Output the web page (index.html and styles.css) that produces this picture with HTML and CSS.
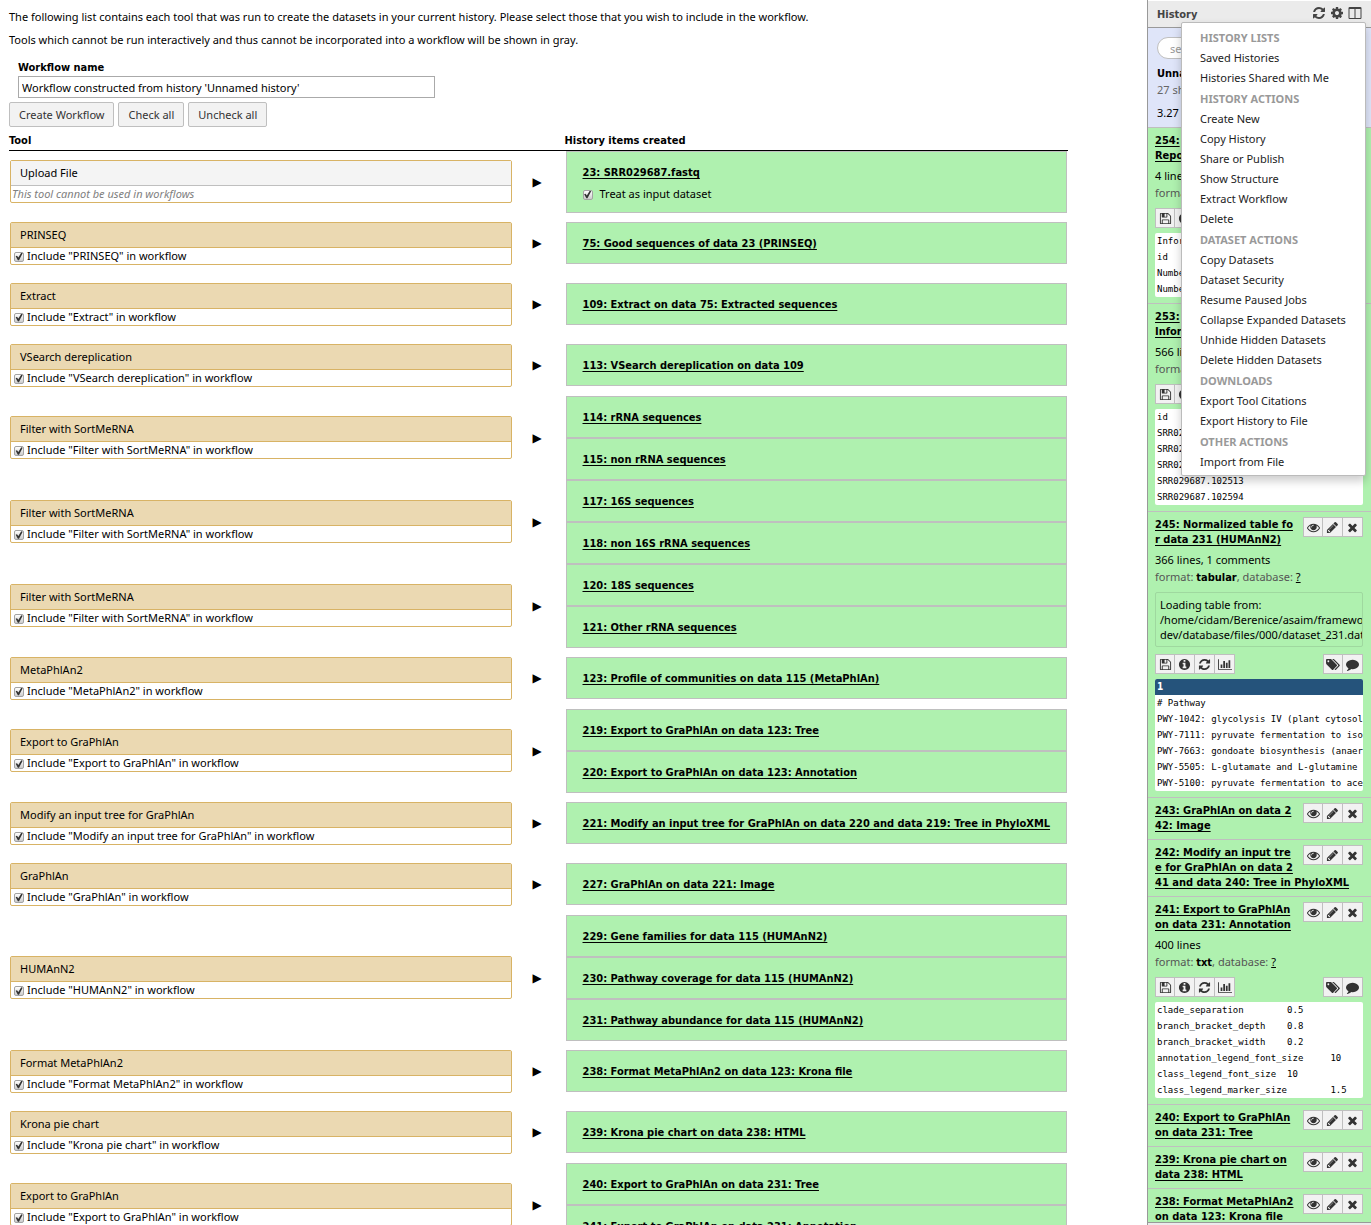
FILE: index.html
```
<!DOCTYPE html>
<html lang="en">
<head>
<meta charset="utf-8">
<title>Extract workflow from history</title>
<link rel="stylesheet" href="styles.css">
</head>
<body>
<svg class="sprite" aria-hidden="true">
  <symbol id="i-refresh" viewBox="0 0 1792 1792"><path d="M1639 1056q0 5-1 7-64 268-268 434.5t-478 166.5q-146 0-282.5-55t-243.5-157l-129 129q-19 19-45 19t-45-19-19-45v-448q0-26 19-45t45-19h448q26 0 45 19t19 45-19 45l-137 137q71 66 161 102t187 36q134 0 250-65t186-179q11-17 53-117 8-23 30-23h192q13 0 22.5 9.5t9.5 22.5zm25-800v448q0 26-19 45t-45 19h-448q-26 0-45-19t-19-45 19-45l138-138q-148-137-349-137-134 0-250 65t-186 179q-11 17-53 117-8 23-30 23h-199q-13 0-22.5-9.5t-9.5-22.5v-7q65-268 270-434.5t480-166.5q146 0 284 55.5t245 156.5l130-129q19-19 45-19t45 19 19 45z"/></symbol>
  <symbol id="i-cog" viewBox="0 0 1792 1792"><path d="M1152 896q0-106-75-181t-181-75-181 75-75 181 75 181 181 75 181-75 75-181zm512-109v222q0 12-8 23t-20 13l-185 28q-19 54-39 91 35 50 107 138 10 12 10 25t-9 23q-27 37-99 108t-94 71q-12 0-26-9l-138-108q-44 23-91 38-16 136-29 186-7 28-36 28h-222q-14 0-24.5-8.5t-11.5-21.5l-28-184q-49-16-90-37l-141 107q-10 9-25 9-14 0-25-11-126-114-165-168-7-10-7-23 0-12 8-23 15-21 51-66.5t54-70.5q-27-50-41-99l-183-27q-13-2-21-12.500t-8-23.500v-222q0-12 8-23t19-13l186-28q14-46 39-92-40-57-107-138-10-12-10-24 0-10 9-23 26-36 98.500-107.500t94.500-71.500q13 0 26 10l138 107q44-23 91-38 16-136 29-186 7-28 36-28h222q14 0 24.500 8.500t11.500 21.500l28 184q49 16 90 37l142-107q9-9 24-9 13 0 25 10 129 119 165 170 7 8 7 22 0 12-8 23-15 21-51 66.500t-54 70.500q26 50 41 98l183 28q13 2 21 12.500t8 23.500z"/></symbol>
  <symbol id="i-columns" viewBox="0 0 1792 1792"><path d="M224 1536h608v-1152h-640v1120q0 13 9.500 22.500t22.500 9.500zm1376-32v-1120h-640v1152h608q13 0 22.500-9.500t9.500-22.500zm128-1216v1216q0 66-47 113t-113 47h-1344q-66 0-113-47t-47-113v-1216q0-66 47-113t113-47h1344q66 0 113 47t47 113z"/></symbol>
  <symbol id="i-eye" viewBox="0 0 1792 1792"><path d="M1664 960q-152-236-381-353 61 104 61 225 0 185-131.500 316.500t-316.500 131.500-316.500-131.500-131.500-316.500q0-121 61-225-229 117-381 353 133 205 333.500 326.500t434.500 121.500 434.500-121.500 333.500-326.500zm-720-384q0-20-14-34t-34-14q-125 0-214.500 89.500t-89.500 214.500q0 20 14 34t34 14 34-14 14-34q0-86 61-147t147-61q20 0 34-14t14-34zm848 384q0 34-20 69-140 230-376.500 368.500t-499.500 138.500-499.500-139-376.500-368q-20-35-20-69t20-69q140-229 376.500-368t499.500-139 499.500 139 376.500 368q20 35 20 69z"/></symbol>
  <symbol id="i-pencil" viewBox="0 0 1792 1792"><path d="M491 1536l91-91-235-235-91 91v107h128v128h107zm523-928q0-22-22-22-10 0-17 7l-542 542q-7 7-7 17 0 22 22 22 10 0 17-7l542-542q7-7 7-17zm-54-192l416 416-832 832h-416v-416zm683 96q0 53-37 90l-166 166-416-416 166-165q36-38 90-38 53 0 91 38l235 234q37 39 37 91z"/></symbol>
  <symbol id="i-times" viewBox="0 0 1792 1792"><path d="M1490 1322q0 40-28 68l-136 136q-28 28-68 28t-68-28l-294-294-294 294q-28 28-68 28t-68-28l-136-136q-28-28-28-68t28-68l294-294-294-294q-28-28-28-68t28-68l136-136q28-28 68-28t68 28l294 294 294-294q28-28 68-28t68 28l136 136q28 28 28 68t-28 68l-294 294 294 294q28 28 28 68z"/></symbol>
  <symbol id="i-save" viewBox="0 0 1792 1792"><path d="M512 1536h768v-384h-768v384zm896 0h128v-896q0-14-10-38.500t-20-34.500l-281-281q-10-10-34-20t-39-10v416q0 40-28 68t-68 28h-576q-40 0-68-28t-28-68v-416h-128v1280h128v-416q0-40 28-68t68-28h832q40 0 68 28t28 68v416zm-384-928v-320q0-13-9.500-22.500t-22.500-9.500h-192q-13 0-22.500 9.500t-9.500 22.500v320q0 13 9.500 22.500t22.500 9.500h192q13 0 22.500-9.500t9.500-22.500zm640 32v928q0 40-28 68t-68 28h-1344q-40 0-68-28t-28-68v-1344q0-40 28-68t68-28h928q40 0 88 20t76 48l280 280q28 28 48 76t20 88z"/></symbol>
  <symbol id="i-info" viewBox="0 0 1792 1792"><path d="M1152 1376v-160q0-14-9-23t-23-9h-96v-512q0-14-9-23t-23-9h-320q-14 0-23 9t-9 23v160q0 14 9 23t23 9h96v320h-96q-14 0-23 9t-9 23v160q0 14 9 23t23 9h448q14 0 23-9t9-23zm-128-896v-160q0-14-9-23t-23-9h-192q-14 0-23 9t-9 23v160q0 14 9 23t23 9h192q14 0 23-9t9-23zm640 416q0 209-103 385.500t-279.500 279.500-385.500 103-385.500-103-279.500-279.500-103-385.500 103-385.500 279.500-279.500 385.500-103 385.500 103 279.500 279.500 103 385.500z"/></symbol>
  <symbol id="i-chart" viewBox="0 0 2048 1792"><path d="M640 896v512h-256v-512h256zm384-512v1024h-256v-1024h256zm1024 1152v128h-2048v-1536h128v1408h1920zm-640-896v768h-256v-768h256zm384-384v1152h-256v-1152h256z"/></symbol>
  <symbol id="i-tags" viewBox="0 0 1920 1792"><path d="M448 448q0-53-37.500-90.500t-90.500-37.500-90.500 37.500-37.500 90.500 37.500 90.500 90.500 37.500 90.500-37.500 37.500-90.500zm1067 576q0 53-37 90l-491 492q-39 37-91 37-53 0-90-37l-715-716q-38-37-64.500-101t-26.500-117v-416q0-52 38-90t90-38h416q53 0 117 26.500t102 64.500l715 714q37 39 37 91zm384 0q0 53-37 90l-491 492q-39 37-91 37-36 0-59-14t-53-45l470-470q37-37 37-90 0-52-37-91l-715-714q-38-38-102-64.500t-117-26.500h224q53 0 117 26.500t102 64.500l715 714q37 39 37 91z"/></symbol>
  <symbol id="i-comment" viewBox="0 0 1792 1792"><path d="M1792 896q0 174-120 321.500t-326 233-450 85.500q-70 0-145-8-198 175-460 242-49 14-114 22-17 2-30.500-9t-17.500-29v-1q-3-4-.5-12t2-10 4.500-9.500l6-9 7-8.500 8-9q7-8 31-34.500t34.500-38 31-39.500 32.500-51 27-59 26-76q-157-89-247.500-220t-90.500-281q0-130 71-248.500t191-204.500 286-136.500 348-50.500q244 0 450 85.500t326 233 120 321.500z"/></symbol>
</svg>

<div class="app">
<main class="center">
  <p class="intro">The following list contains each tool that was run to create the datasets in your current history. Please select those that you wish to include in the workflow.</p>
  <p class="intro">Tools which cannot be run interactively and thus cannot be incorporated into a workflow will be shown in gray.</p>
  <form class="name-form">
    <label for="wf-name">Workflow name</label>
    <input class="text" id="wf-name" type="text" value="Workflow constructed from history 'Unnamed history'">
  </form>
  <div class="actions">
    <button class="btn" type="button">Create Workflow</button>
    <button class="btn" type="button">Check all</button>
    <button class="btn" type="button">Uncheck all</button>
  </div>

  <table class="tools">
    <colgroup><col><col class="arrow-col"><col></colgroup>
    <thead><tr><th>Tool</th><th></th><th>History items created</th></tr></thead>
    <tbody>
      <tr><td><div class="tool disabled"><div class="tool-name">Upload File</div><div class="tool-body">This tool cannot be used in workflows</div></div></td><td class="arrow">▶</td>
        <td><div class="item tall"><a href="#">23: SRR029687.fastq</a><label><input type="checkbox" checked>Treat as input dataset</label></div></td></tr>
      <tr><td><div class="tool"><div class="tool-name">PRINSEQ</div><label class="tool-body"><input type="checkbox" checked>Include "PRINSEQ" in workflow</label></div></td><td class="arrow">▶</td>
        <td><div class="item"><a href="#">75: Good sequences of data 23 (PRINSEQ)</a></div></td></tr>
      <tr><td><div class="tool"><div class="tool-name">Extract</div><label class="tool-body"><input type="checkbox" checked>Include "Extract" in workflow</label></div></td><td class="arrow">▶</td>
        <td><div class="item"><a href="#">109: Extract on data 75: Extracted sequences</a></div></td></tr>
      <tr><td><div class="tool"><div class="tool-name">VSearch dereplication</div><label class="tool-body"><input type="checkbox" checked>Include "VSearch dereplication" in workflow</label></div></td><td class="arrow">▶</td>
        <td><div class="item"><a href="#">113: VSearch dereplication on data 109</a></div></td></tr>
      <tr><td><div class="tool"><div class="tool-name">Filter with SortMeRNA</div><label class="tool-body"><input type="checkbox" checked>Include "Filter with SortMeRNA" in workflow</label></div></td><td class="arrow">▶</td>
        <td><div class="item"><a href="#">114: rRNA sequences</a></div><div class="item"><a href="#">115: non rRNA sequences</a></div></td></tr>
      <tr><td><div class="tool"><div class="tool-name">Filter with SortMeRNA</div><label class="tool-body"><input type="checkbox" checked>Include "Filter with SortMeRNA" in workflow</label></div></td><td class="arrow">▶</td>
        <td><div class="item"><a href="#">117: 16S sequences</a></div><div class="item"><a href="#">118: non 16S rRNA sequences</a></div></td></tr>
      <tr><td><div class="tool"><div class="tool-name">Filter with SortMeRNA</div><label class="tool-body"><input type="checkbox" checked>Include "Filter with SortMeRNA" in workflow</label></div></td><td class="arrow">▶</td>
        <td><div class="item"><a href="#">120: 18S sequences</a></div><div class="item"><a href="#">121: Other rRNA sequences</a></div></td></tr>
      <tr><td><div class="tool"><div class="tool-name">MetaPhlAn2</div><label class="tool-body"><input type="checkbox" checked>Include "MetaPhlAn2" in workflow</label></div></td><td class="arrow">▶</td>
        <td><div class="item"><a href="#">123: Profile of communities on data 115 (MetaPhlAn)</a></div></td></tr>
      <tr><td><div class="tool"><div class="tool-name">Export to GraPhlAn</div><label class="tool-body"><input type="checkbox" checked>Include "Export to GraPhlAn" in workflow</label></div></td><td class="arrow">▶</td>
        <td><div class="item"><a href="#">219: Export to GraPhlAn on data 123: Tree</a></div><div class="item"><a href="#">220: Export to GraPhlAn on data 123: Annotation</a></div></td></tr>
      <tr><td><div class="tool"><div class="tool-name">Modify an input tree for GraPhlAn</div><label class="tool-body"><input type="checkbox" checked>Include "Modify an input tree for GraPhlAn" in workflow</label></div></td><td class="arrow">▶</td>
        <td><div class="item"><a href="#">221: Modify an input tree for GraPhlAn on data 220 and data 219: Tree in PhyloXML</a></div></td></tr>
      <tr><td><div class="tool"><div class="tool-name">GraPhlAn</div><label class="tool-body"><input type="checkbox" checked>Include "GraPhlAn" in workflow</label></div></td><td class="arrow">▶</td>
        <td><div class="item"><a href="#">227: GraPhlAn on data 221: Image</a></div></td></tr>
      <tr><td><div class="tool"><div class="tool-name">HUMAnN2</div><label class="tool-body"><input type="checkbox" checked>Include "HUMAnN2" in workflow</label></div></td><td class="arrow">▶</td>
        <td><div class="item"><a href="#">229: Gene families for data 115 (HUMAnN2)</a></div><div class="item"><a href="#">230: Pathway coverage for data 115 (HUMAnN2)</a></div><div class="item"><a href="#">231: Pathway abundance for data 115 (HUMAnN2)</a></div></td></tr>
      <tr><td><div class="tool"><div class="tool-name">Format MetaPhlAn2</div><label class="tool-body"><input type="checkbox" checked>Include "Format MetaPhlAn2" in workflow</label></div></td><td class="arrow">▶</td>
        <td><div class="item"><a href="#">238: Format MetaPhlAn2 on data 123: Krona file</a></div></td></tr>
      <tr><td><div class="tool"><div class="tool-name">Krona pie chart</div><label class="tool-body"><input type="checkbox" checked>Include "Krona pie chart" in workflow</label></div></td><td class="arrow">▶</td>
        <td><div class="item"><a href="#">239: Krona pie chart on data 238: HTML</a></div></td></tr>
      <tr><td><div class="tool"><div class="tool-name">Export to GraPhlAn</div><label class="tool-body"><input type="checkbox" checked>Include "Export to GraPhlAn" in workflow</label></div></td><td class="arrow">▶</td>
        <td><div class="item"><a href="#">240: Export to GraPhlAn on data 231: Tree</a></div><div class="item"><a href="#">241: Export to GraPhlAn on data 231: Annotation</a></div></td></tr>
    </tbody>
  </table>
</main>

<aside class="history">
  <header class="panel-head">
    <h2>History</h2>
    <button type="button" aria-label="Refresh history"><svg><use href="#i-refresh"/></svg></button>
    <button type="button" aria-label="History options"><svg><use href="#i-cog"/></svg></button>
    <button type="button" aria-label="View all histories"><svg><use href="#i-columns"/></svg></button>
  </header>
  <nav class="menu" aria-label="History options">
    <h3>HISTORY LISTS</h3>
    <a href="#">Saved Histories</a>
    <a href="#">Histories Shared with Me</a>
    <h3>HISTORY ACTIONS</h3>
    <a href="#">Create New</a>
    <a href="#">Copy History</a>
    <a href="#">Share or Publish</a>
    <a href="#">Show Structure</a>
    <a href="#">Extract Workflow</a>
    <a href="#">Delete</a>
    <h3>DATASET ACTIONS</h3>
    <a href="#">Copy Datasets</a>
    <a href="#">Dataset Security</a>
    <a href="#">Resume Paused Jobs</a>
    <a href="#">Collapse Expanded Datasets</a>
    <a href="#">Unhide Hidden Datasets</a>
    <a href="#">Delete Hidden Datasets</a>
    <h3>DOWNLOADS</h3>
    <a href="#">Export Tool Citations</a>
    <a href="#">Export History to File</a>
    <h3>OTHER ACTIONS</h3>
    <a href="#">Import from File</a>
  </nav>
  <section class="summary">
    <input class="search" type="search" placeholder="search datasets" aria-label="Search datasets">
    <b>Unnamed history</b>
    <span class="shown">27 shown</span>
    <span class="size">3.27 GB</span>
  </section>
  <div class="datasets">
    <article class="ds">
      <a class="title" href="#">254: <br>Report</a>
      <p class="lines">4 lines</p>
      <p class="format">format: <b>txt</b></p>
      <div class="tools-row"><span class="group"><button type="button" aria-label="Save"><svg><use href="#i-save"/></svg></button><button type="button" aria-label="Details"><svg><use href="#i-info"/></svg></button></span></div>
      <pre class="peek">Information
id
Number
Number</pre>
    </article>
    <article class="ds">
      <a class="title" href="#">253: <br>Information</a>
      <p class="lines">566 lines</p>
      <p class="format">format: <b>txt</b></p>
      <div class="tools-row"><span class="group"><button type="button" aria-label="Save"><svg><use href="#i-save"/></svg></button><button type="button" aria-label="Details"><svg><use href="#i-info"/></svg></button></span></div>
      <pre class="peek">id
SRR029687
SRR029687
SRR029687
SRR029687.102513
SRR029687.102594</pre>
    </article>
    <article class="ds">
      <span class="group primary"><button type="button" aria-label="View"><svg><use href="#i-eye"/></svg></button><button type="button" aria-label="Edit"><svg><use href="#i-pencil"/></svg></button><button type="button" aria-label="Delete"><svg><use href="#i-times"/></svg></button></span>
      <a class="title" href="#">245: Normalized table fo<br>r data 231 (HUMAnN2)</a>
      <p class="lines">366 lines, 1 comments</p>
      <p class="format">format: <b>tabular</b>, database: <a href="#">?</a></p>
      <div class="info">Loading table from:<br>/home/cidam/Berenice/asaim/framework<br>dev/database/files/000/dataset_231.dat</div>
      <div class="tools-row"><span class="group"><button type="button" aria-label="Save"><svg><use href="#i-save"/></svg></button><button type="button" aria-label="Details"><svg><use href="#i-info"/></svg></button><button type="button" aria-label="Run again"><svg><use href="#i-refresh"/></svg></button><button type="button" aria-label="Visualize"><svg class="wide"><use href="#i-chart"/></svg></button></span><span class="group"><button type="button" aria-label="Tags"><svg class="wide"><use href="#i-tags"/></svg></button><button type="button" aria-label="Annotate"><svg><use href="#i-comment"/></svg></button></span></div>
      <pre class="peek"><b>1</b># Pathway
PWY-1042: glycolysis IV (plant cytosol)
PWY-7111: pyruvate fermentation to isobutanol
PWY-7663: gondoate biosynthesis (anaerobic)
PWY-5505: L-glutamate and L-glutamine
PWY-5100: pyruvate fermentation to acetate</pre>
    </article>
    <article class="ds">
      <span class="group primary"><button type="button" aria-label="View"><svg><use href="#i-eye"/></svg></button><button type="button" aria-label="Edit"><svg><use href="#i-pencil"/></svg></button><button type="button" aria-label="Delete"><svg><use href="#i-times"/></svg></button></span>
      <a class="title" href="#">243: GraPhlAn on data 2<br>42: Image</a>
    </article>
    <article class="ds">
      <span class="group primary"><button type="button" aria-label="View"><svg><use href="#i-eye"/></svg></button><button type="button" aria-label="Edit"><svg><use href="#i-pencil"/></svg></button><button type="button" aria-label="Delete"><svg><use href="#i-times"/></svg></button></span>
      <a class="title" href="#">242: Modify an input tre<br>e for GraPhlAn on data 2<br>41 and data 240: Tree in PhyloXML</a>
    </article>
    <article class="ds">
      <span class="group primary"><button type="button" aria-label="View"><svg><use href="#i-eye"/></svg></button><button type="button" aria-label="Edit"><svg><use href="#i-pencil"/></svg></button><button type="button" aria-label="Delete"><svg><use href="#i-times"/></svg></button></span>
      <a class="title" href="#">241: Export to GraPhlAn<br>on data 231: Annotation</a>
      <p class="lines">400 lines</p>
      <p class="format">format: <b>txt</b>, database: <a href="#">?</a></p>
      <div class="tools-row"><span class="group"><button type="button" aria-label="Save"><svg><use href="#i-save"/></svg></button><button type="button" aria-label="Details"><svg><use href="#i-info"/></svg></button><button type="button" aria-label="Run again"><svg><use href="#i-refresh"/></svg></button><button type="button" aria-label="Visualize"><svg class="wide"><use href="#i-chart"/></svg></button></span><span class="group"><button type="button" aria-label="Tags"><svg class="wide"><use href="#i-tags"/></svg></button><button type="button" aria-label="Annotate"><svg><use href="#i-comment"/></svg></button></span></div>
      <pre class="peek">clade_separation&#9;0.5
branch_bracket_depth&#9;0.8
branch_bracket_width&#9;0.2
annotation_legend_font_size&#9;10
class_legend_font_size&#9;10
class_legend_marker_size&#9;1.5</pre>
    </article>
    <article class="ds">
      <span class="group primary"><button type="button" aria-label="View"><svg><use href="#i-eye"/></svg></button><button type="button" aria-label="Edit"><svg><use href="#i-pencil"/></svg></button><button type="button" aria-label="Delete"><svg><use href="#i-times"/></svg></button></span>
      <a class="title" href="#">240: Export to GraPhlAn<br>on data 231: Tree</a>
    </article>
    <article class="ds">
      <span class="group primary"><button type="button" aria-label="View"><svg><use href="#i-eye"/></svg></button><button type="button" aria-label="Edit"><svg><use href="#i-pencil"/></svg></button><button type="button" aria-label="Delete"><svg><use href="#i-times"/></svg></button></span>
      <a class="title" href="#">239: Krona pie chart on<br>data 238: HTML</a>
    </article>
    <article class="ds">
      <span class="group primary"><button type="button" aria-label="View"><svg><use href="#i-eye"/></svg></button><button type="button" aria-label="Edit"><svg><use href="#i-pencil"/></svg></button><button type="button" aria-label="Delete"><svg><use href="#i-times"/></svg></button></span>
      <a class="title" href="#">238: Format MetaPhlAn2<br>on data 123: Krona file</a>
    </article>
  </div>
  <footer class="panel-foot"></footer>
</aside>
</div>
</body>
</html>
```
FILE: styles.css
```
* { box-sizing: border-box; }

body {
  margin: 0;
  background: #fff;
  color: #000;
  font: 11px/16px "Noto Sans", sans-serif;
}

h2, h3, p, pre { margin: 0; }
b, th, .name-form label, .item a, .title, .panel-head h2 {
  font-family: "DejaVu Sans Condensed", "DejaVu Sans", sans-serif;
  font-weight: bold;
}
button { font: inherit; cursor: pointer; }
svg { display: block; fill: currentColor; }
.sprite { position: absolute; width: 0; height: 0; }

.app { display: flex; height: 100vh; overflow: hidden; }

/* Workflow extraction form */
.center { flex: 1; min-width: 0; padding: 9px 79px 0 9px; overflow: hidden; }
.intro { margin-bottom: 7px; white-space: nowrap; }
.name-form { padding: 5px 9px 0; }
.name-form label { display: block; }
.text {
  display: block;
  width: 417px;
  height: 22px;
  padding: 0 3px;
  border: 1px solid #aaa;
  font: inherit;
  color: #000;
}
.actions { display: flex; gap: 4px; margin: 4px 0 6px; }
.btn {
  height: 25px;
  padding: 0 9px;
  border: 1px solid #bfbfbf;
  border-radius: 2px;
  background: #f2f2f2;
  color: #333;
}

.tools { width: 100%; border-collapse: collapse; table-layout: fixed; }
.arrow-col { width: 52px; }
.tools th { height: 17px; padding: 0; border-bottom: 1px solid #000; text-align: left; line-height: 16px; }
.tools td { padding: 0 1px; vertical-align: middle; }
.tools .arrow { padding: 0 0 0 20px; font: 12px/16px "DejaVu Sans", sans-serif; }

.tool { margin: 9px 0; border: 1px solid #d8b365; border-radius: 2px; background: #fff; }
.tool-name { height: 25px; padding: 0 9px; border-bottom: 1px solid #d8b365; background: #ebd9b2; line-height: 24px; }
.tool-body { display: flex; align-items: center; gap: 3px; height: 16px; padding-left: 3px; }
.disabled .tool-name { border-color: #bfbfbf; background: #f4f4f4; }
.disabled .tool-body { padding-left: 1px; color: gray; font-style: italic; }

.item {
  height: 42px;
  padding: 12px 16px;
  border: 1px solid #bfbfbf;
  background: #aff1af;
  white-space: nowrap;
}
.item.tall { height: 62px; }
.item label { display: flex; align-items: center; gap: 7px; margin-top: 5px; }
a { color: inherit; }
.item a, .title { text-underline-offset: 2px; text-decoration-skip-ink: none; }

input[type="checkbox"] {
  appearance: none;
  width: 10px;
  height: 10px;
  margin: 2px 0 0;
  border: 1px solid #a3a3a3;
  border-radius: 2px;
  background: linear-gradient(#fff, #ccc);
}
input[type="checkbox"]:checked::before {
  content: "";
  display: block;
  width: 8px;
  height: 8px;
  background: #333;
  clip-path: polygon(8% 48%, 25% 40%, 42% 62%, 78% 4%, 96% 8%, 50% 98%, 36% 96%);
}

/* History panel */
.history {
  position: relative;
  display: flex;
  flex: 0 0 224px;
  flex-direction: column;
  min-width: 0;
  border-left: 1px solid #999;
  background: #dfe5f9;
}
.panel-head {
  display: flex;
  align-items: center;
  gap: 4px;
  height: 28px;
  padding: 0 9px;
  border-top: 1px solid #fff;
  border-bottom: 1px solid #999;
  background: #ebebeb;
  color: #444;
}
.panel-head h2 { flex: 1; padding-top: 2px; font-size: 11px; }
.panel-head button { padding: 0 0 3px; border: 0; background: none; color: inherit; }
.panel-head svg { width: 14px; height: 14px; }

.menu {
  position: absolute;
  z-index: 2;
  top: 22px;
  right: 5px;
  width: 185px;
  padding: 5px 0 3px;
  border: 1px solid #bbb;
  border-radius: 2px;
  background: #fff;
  box-shadow: 0 5px 10px rgba(0, 0, 0, .2);
}
.menu h3, .menu a { display: block; padding-left: 18px; font-size: 11px; line-height: 20px; white-space: nowrap; }
.menu h3 { color: #999; }
.menu a + h3 { padding-top: 1px; }
.menu a { color: #222; text-decoration: none; }

.summary { display: flex; flex-direction: column; height: 99px; padding: 9px 9px 0; white-space: nowrap; }
.search {
  width: 100%;
  height: 22px;
  margin-bottom: 7px;
  padding: 0 12px;
  border: 1px solid #bfbfbf;
  border-radius: 11px;
  background: #fff;
  font: inherit;
}
.search::placeholder { color: #999; }
.shown { color: #666; line-height: 15px; }
.size { margin-top: 8px; }

.datasets { flex: 1; min-height: 0; overflow: hidden; background: #aff1af; }
.ds { padding: 5px 8px 6px 7px; border-top: 1px solid #bfbfbf; }
.title { display: block; line-height: 15px; white-space: nowrap; }
.lines { margin-top: 5px; line-height: 16px; }
.format { color: #555; line-height: 17px; }
.format b, .format a { color: #000; line-height: 1; }
.info {
  height: 55px;
  margin-top: 7px;
  padding: 4px;
  border: 1px solid #9fd89f;
  border-radius: 2px;
  line-height: 15px;
  white-space: nowrap;
  overflow: hidden;
}

.group { display: flex; }
.group button {
  display: grid;
  place-items: center;
  width: 20px;
  height: 20px;
  padding: 0;
  border: 1px solid #bfbfbf;
  background: #f2f2f2;
  color: #333;
}
.group button + button { border-left: 0; }
.group svg { width: 13px; height: 13px; }
.group svg.wide { width: 14px; }
.primary { float: right; }
.tools-row { display: flex; justify-content: space-between; margin: 7px 0 5px; }

.peek {
  padding-left: 2px;
  border-radius: 2px;
  background: #fff;
  font: 9px/16px "DejaVu Sans Mono", monospace;
  tab-size: 8;
  overflow: hidden;
}
.peek b { display: block; margin-left: -2px; padding-left: 2px; background: #25537b; color: #fff; font-size: 10px; }

.panel-foot { height: 3px; border-top: 1px solid #999; background: #ebebeb; }
```
